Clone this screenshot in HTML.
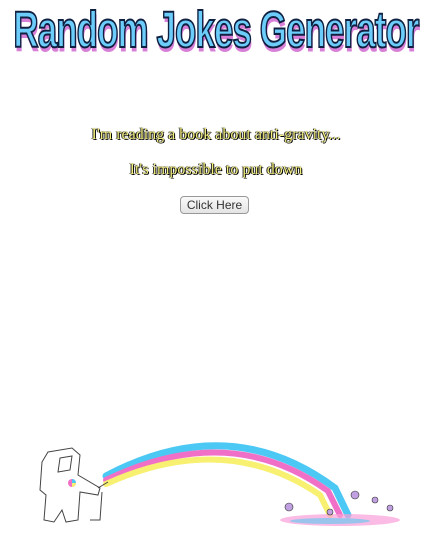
<!DOCTYPE html>
<html><head><meta charset="utf-8"><style>
html,body{margin:0;padding:0;background:#fff;width:432px;height:536px;overflow:hidden;position:relative;font-family:"Liberation Serif",serif}
.title{position:absolute;left:-100px;top:4px;width:632px;text-align:center;white-space:nowrap;font-family:"Liberation Sans",sans-serif;font-weight:bold;font-size:38px;line-height:40px;color:#6ccdfb;-webkit-text-stroke:1.5px #102040;text-shadow:1px 3px 0 #d880d8;transform:scale(0.92,1.35);transform-origin:50% 0;letter-spacing:-1px}
.j{position:absolute;left:0;width:432px;text-align:center;font-size:16px;color:#f4f080;text-shadow:0 0 1px #000,1px 1px 0 #000,-1px 0 0 #333}
button{position:absolute;left:180px;top:196px;width:69px;height:18px;font:12px "Liberation Sans",sans-serif;color:#333;background:linear-gradient(#fafafa,#e4e4e4);border:1px solid #999;border-radius:4px;padding:0}
</style></head><body>
<div class="title">Random Jokes Generator</div>
<div class="j" style="top:126px">I'm reading a book about anti-gravity...</div>
<div class="j" style="top:161px">It's impossible to put down</div>
<button>Click Here</button>
<svg width="432" height="536" style="position:absolute;left:0;top:0" viewBox="0 0 432 536">
<g fill="none" stroke-linecap="round">
<path d="M106 476 Q230 410 335 488 L348 515" stroke="#4cc8f4" stroke-width="7"/>
<path d="M106 480 Q230 420 328 491 L340 515" stroke="#f070c8" stroke-width="6"/>
<path d="M106 484 Q225 430 320 495 L330 515" stroke="#f8f070" stroke-width="6"/>
</g>
<ellipse cx="340" cy="520" rx="60" ry="6" fill="#f8a0d8" opacity="0.7"/>
<ellipse cx="330" cy="521" rx="40" ry="3" fill="#70c8f0" opacity="0.7"/>
<g fill="#c0a0e0" stroke="#333" stroke-width="0.6">
<circle cx="289" cy="507" r="4"/><circle cx="330" cy="512" r="3"/><circle cx="355" cy="495" r="4"/><circle cx="390" cy="508" r="3"/><circle cx="375" cy="500" r="3"/>
</g>
<g fill="#fff" stroke="#444" stroke-width="1">
<path d="M48 452 L72 448 L80 455 L78 475 L100 488 L98 495 L80 492 L78 520 L66 522 L62 510 L54 522 L44 520 L46 495 L40 490 L42 462 Z"/>
<path d="M60 458 L72 456 L70 470 L58 472 Z"/>
<path d="M98 488 L108 482 M90 520 L100 520 L102 492"/>
</g>
<circle cx="72" cy="483" r="4" fill="#f070c8"/><path d="M72 483 L72 479 A4 4 0 0 1 76 483 Z" fill="#4cc8f4"/><path d="M72 483 L76 483 A4 4 0 0 1 72 487 Z" fill="#f8f070"/>
</svg>
</body></html>
